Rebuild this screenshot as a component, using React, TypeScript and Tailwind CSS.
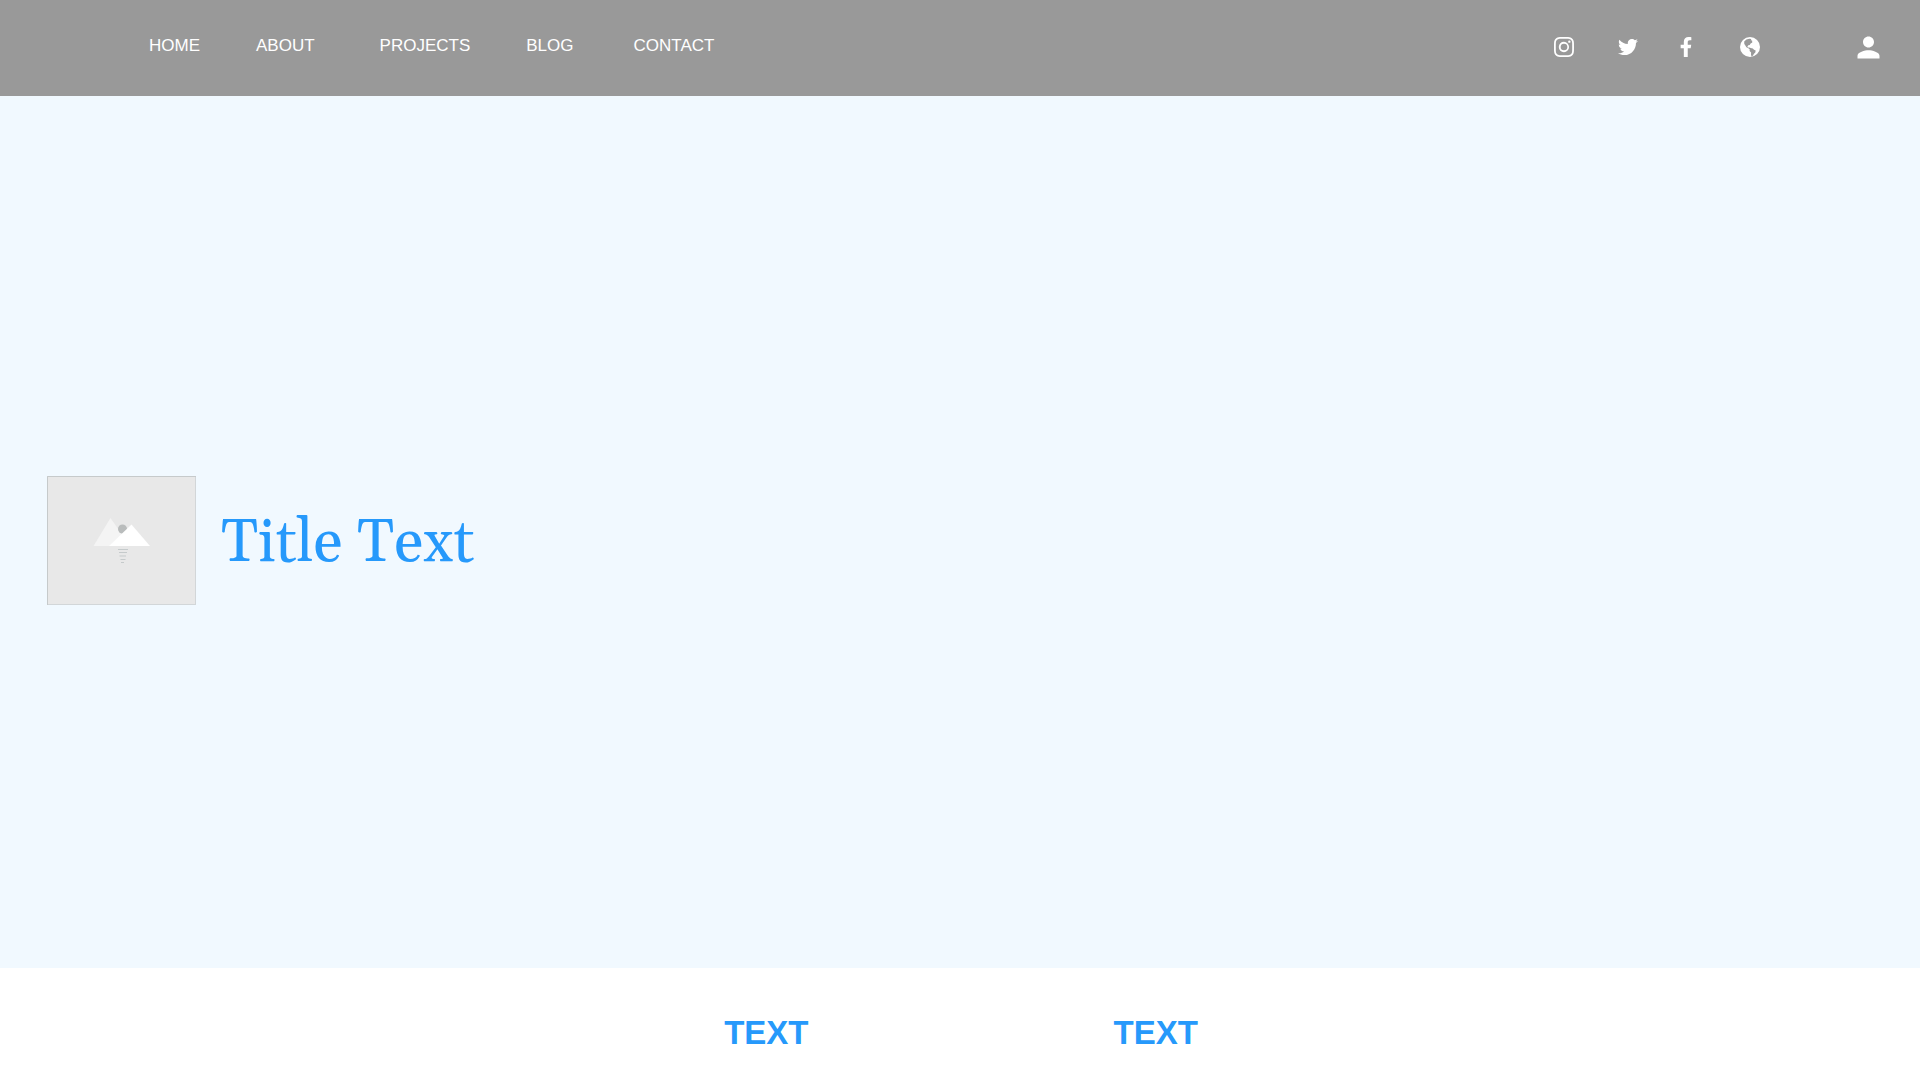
import { FaFacebookF, FaTwitter } from "react-icons/fa";
import { BsInstagram } from "react-icons/bs";
import { MdPerson } from "react-icons/md";

const links = [
  { label: "HOME", gap: "" },
  { label: "ABOUT", gap: "ml-14" },
  { label: "PROJECTS", gap: "ml-[65px]" },
  { label: "BLOG", gap: "ml-14" },
  { label: "CONTACT", gap: "ml-15" },
];

function Globe() {
  return (
    <svg viewBox="0 0 20 20" className="size-5" aria-hidden="true">
      <circle cx="10" cy="10" r="10" fill="#fff" />
      <path
        fill="#999"
        d="M4.2 4.6 6.4 2.6 9.3 1.7l2 .3-.5 1.3 1.3.3.2 1.8-1.7 1.1-.9 1.4-1.4.3-.9 1.2.6 1 1.3.1 1.4.4 2.1.5 1.2 1.3 1.7.9-.4 1.9-1.5 1.5-.7 1.6-1.6.8-.5-1.8.1-2-1.5-1.6.2-1.6-1.4-1.1-2-1-1.2-2-.9-1.2z"
      />
    </svg>
  );
}

function Placeholder() {
  return (
    <svg viewBox="0 0 150 129" className="h-[129px] w-[150px] shrink-0" role="img" aria-label="Image placeholder">
      <rect x="0.5" y="0.5" width="148" height="128" fill="#e8e8e8" stroke="#d2d6d8" />
      <path d="M0.5 129V0.5H149" fill="none" stroke="#c6cacb" />
      <path d="M46.500 70 63.500 42 83 70z" fill="#f4f4f4" />
      <circle cx="75.500" cy="53" r="4.500" fill="#b9bcbc" />
      <path d="M62 70 84.500 48.500 103 70z" fill="#fff" />
      <path d="M71 73.500h10M72 76.500h8M72.500 80h6.500M73.500 83.500h5M74 86.500h3" stroke="#c5cacb" />
    </svg>
  );
}

export default function App() {
  return (
    <div className="flex min-h-screen flex-col bg-white font-['Liberation_Sans',Arial,sans-serif]">
      <header className="flex h-24 items-start justify-between bg-[#999] pl-[149px] pr-[35px] text-white">
        <nav className="flex pt-9 text-[17px] leading-5">
          {links.map((l) => (
            <a key={l.label} href="#" className={l.gap}>
              {l.label}
            </a>
          ))}
        </nav>
        <div className="flex h-[94px] items-center">
          <a href="#" aria-label="Instagram"><BsInstagram size={20} /></a>
          <a href="#" aria-label="Twitter" className="ml-11"><FaTwitter size={20} /></a>
          <a href="#" aria-label="Facebook" className="ml-[38px]"><FaFacebookF size={20} /></a>
          <a href="#" aria-label="Website" className="ml-11"><Globe /></a>
          <button type="button" aria-label="Account" className="ml-[92px]">
            <MdPerson size={33} />
          </button>
        </div>
      </header>
      <main className="flex flex-1 flex-col">
        <section className="flex flex-1 items-center gap-6 bg-[#f1f9ff] pl-[47px] pt-4">
          <Placeholder />
          <h1 className="pt-2 font-[Gelasio,Georgia,serif] text-[60px] leading-[72px] text-[#2699fb]">Title Text</h1>
        </section>
        <section className="flex h-28 items-center justify-center gap-[305px] pl-0.5 pt-[18px] text-[33px] font-bold leading-10 text-[#2699fb]">
          <h2>TEXT</h2>
          <h2>TEXT</h2>
        </section>
      </main>
    </div>
  );
}
